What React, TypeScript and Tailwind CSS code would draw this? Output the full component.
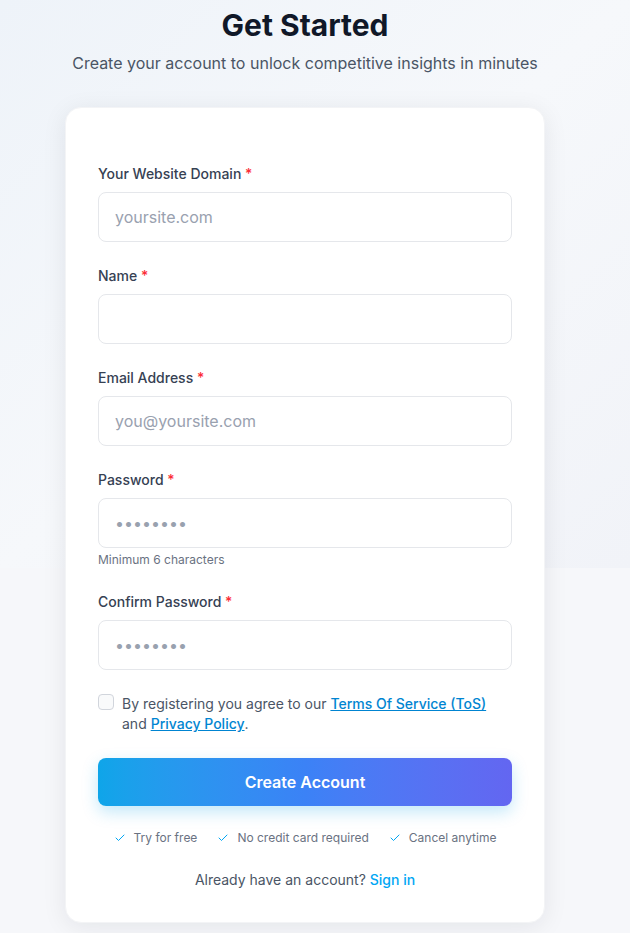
import { FC, useState } from 'react'

const CheckIcon: FC<{ className?: string }> = ({ className }) => (
  <svg viewBox="0 0 24 24" fill="none" stroke="currentColor" strokeWidth={2} strokeLinecap="round" strokeLinejoin="round" className={className}>
    <path d="M20 6 9 17l-5-5" />
  </svg>
)

interface FieldProps {
  label: string
  type?: string
  placeholder?: string
  hint?: string
}

const Field: FC<FieldProps> = ({ label, type = 'text', placeholder, hint }) => (
  <div>
    <label className="block text-sm leading-5 font-medium text-gray-700 mb-2">
      {label} <span className="text-red-500">*</span>
    </label>
    <input
      type={type}
      placeholder={placeholder}
      className="w-full h-[50px] px-4 rounded-lg border border-gray-200 bg-white text-base text-gray-900 placeholder:text-gray-400 focus:outline-none"
    />
    {hint && <p className="mt-1 text-xs leading-4 text-gray-500">{hint}</p>}
  </div>
)

export default function App() {
  const [agreed, setAgreed] = useState(false)

  return (
    <div className="relative min-h-[933px] bg-[#f6f7fa] font-['Inter',sans-serif] overflow-hidden">
      {/* Background wash */}
      <div className="absolute inset-x-0 top-0 h-[568px] bg-gradient-to-br from-[#eef3f9] via-[#f6f8fb] to-[#f1f3f8]" />

      <div className="relative flex flex-col items-center pt-[7px] pb-3 pr-5">
        <h1 className="text-3xl leading-9 font-bold text-gray-900 mb-2">Get Started</h1>
        <p className="text-base leading-6 text-gray-600 mb-8">
          Create your account to unlock competitive insights in minutes
        </p>

        <div className="w-[480px] bg-white rounded-2xl shadow-[0_4px_24px_rgba(15,23,42,0.08)] border border-gray-100 px-8 pt-14 pb-8">
          <div className="flex flex-col gap-6">
            <Field label="Your Website Domain" placeholder="yoursite.com" />
            <Field label="Name" />
            <Field label="Email Address" type="email" placeholder="you@yoursite.com" />
            <Field label="Password" type="password" placeholder="••••••••" hint="Minimum 6 characters" />
            <Field label="Confirm Password" type="password" placeholder="••••••••" />

            <label className="flex items-start gap-2 text-sm leading-5 text-gray-600">
              <input
                type="checkbox"
                checked={agreed}
                onChange={(e) => setAgreed(e.target.checked)}
                className="mt-0 w-4 h-4 shrink-0 appearance-none rounded border border-gray-300 bg-gray-50"
              />
              <span>
                By registering you agree to our{' '}
                <a href="#" className="text-sky-600 underline font-medium">Terms Of Service (ToS)</a>
                <br />
                and <a href="#" className="text-sky-600 underline font-medium">Privacy Policy</a>.
              </span>
            </label>

            <button className="h-12 w-full rounded-lg bg-gradient-to-r from-[#0ea5e9] via-[#3b82f6] to-[#6366f1] text-white text-base font-semibold shadow-[0_6px_16px_rgba(14,165,233,0.25)]">
              Create Account
            </button>
          </div>

          <div className="mt-6 flex items-center justify-center gap-5 text-xs leading-4 text-gray-500">
            <span className="flex items-center gap-2">
              <CheckIcon className="w-3 h-3 text-sky-500" /> Try for free
            </span>
            <span className="flex items-center gap-2">
              <CheckIcon className="w-3 h-3 text-sky-500" /> No credit card required
            </span>
            <span className="flex items-center gap-2">
              <CheckIcon className="w-3 h-3 text-sky-500" /> Cancel anytime
            </span>
          </div>

          <p className="mt-6 text-center text-sm leading-5 text-gray-600">
            Already have an account?{' '}
            <a href="#" className="text-sky-500 font-medium">Sign in</a>
          </p>
        </div>
      </div>
    </div>
  )
}
